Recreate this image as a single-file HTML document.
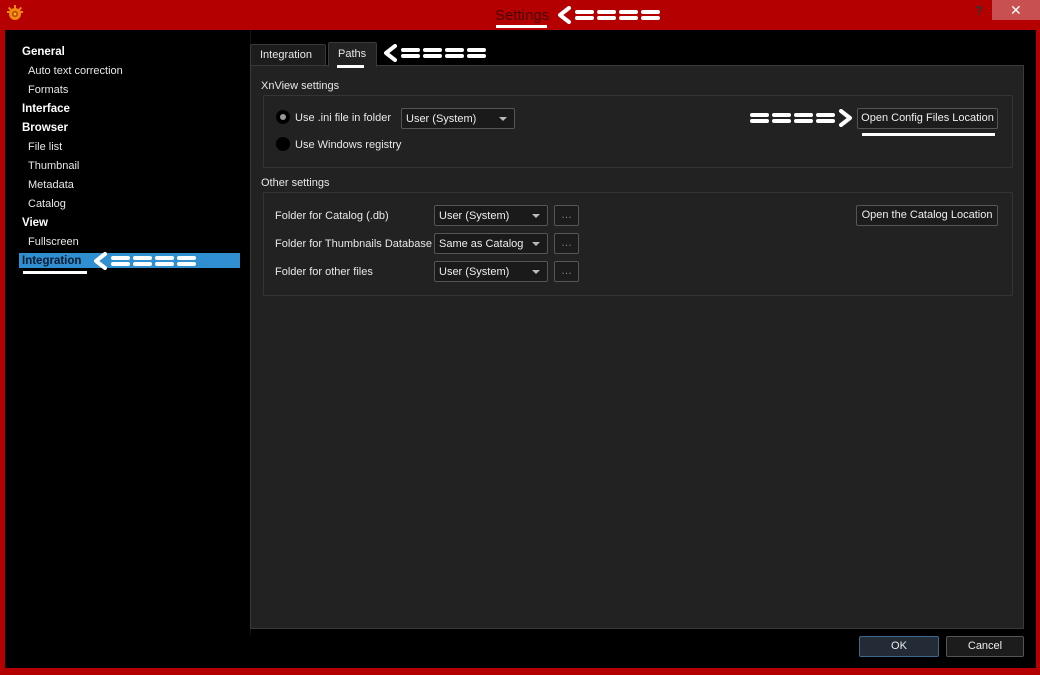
<!DOCTYPE html>
<html><head><meta charset="utf-8"><style>
*{margin:0;padding:0;box-sizing:border-box}
body{width:1040px;height:675px;background:#b40000;position:relative;overflow:hidden;font-family:"Liberation Sans",sans-serif;font-size:11px;color:#e8e8e8}
.a{position:absolute}
.t{position:absolute;white-space:nowrap;line-height:14px}
.b{font-weight:bold;color:#fff;font-size:11.5px}
.combo{position:absolute;background:#1a1a1a;border:1px solid #555;border-radius:2px;height:21px;padding:3px 4px;line-height:14px;color:#eee;white-space:nowrap}
.combo:after{content:"";position:absolute;right:7px;top:8px;border-left:4px solid transparent;border-right:4px solid transparent;border-top:4px solid #bbb}
.btn{position:absolute;background:#1c1c1c;border:1px solid #555;border-radius:2px;height:21px;line-height:19px;text-align:center;color:#eee;white-space:nowrap}
.grp{position:absolute;border:1px solid #353535;border-radius:2px}
</style></head><body>
<svg class="a" style="left:5px;top:4px" width="20" height="18" viewBox="0 0 20 18"><g fill="#f08a10"><circle cx="10" cy="10" r="6"/><rect x="9" y="1" width="2" height="4"/><rect x="4" y="3" width="2" height="4" transform="rotate(-40 5 5)"/><rect x="14" y="3" width="2" height="4" transform="rotate(40 15 5)"/><rect x="2" y="7" width="3" height="2"/><rect x="15" y="7" width="3" height="2"/></g><circle cx="10" cy="10" r="3" fill="#b84000"/><circle cx="10" cy="10" r="1.5" fill="#f8b030"/></svg>
<div class="t" style="left:495px;top:7px;font-size:15px;line-height:17px;color:#4a0000">Settings</div>
<div class="a" style="left:496px;top:25px;width:51px;height:3px;background:#fff"></div>
<div class="t" style="left:975px;top:3px;font-size:13px;line-height:15px;font-weight:bold;color:#333">?</div>
<div class="a" style="left:992px;top:0;width:48px;height:20px;background:#c85050"></div>
<div class="t" style="left:1010px;top:3px;font-size:14px;color:#fff">✕</div>
<div class="a" style="left:5px;top:30px;width:1031px;height:638px;background:#000"></div>
<div class="a" style="left:250px;top:30px;width:1px;height:605px;background:#141414"></div>
<div class="t b" style="left:22px;top:45px">General</div>
<div class="t" style="left:28px;top:64px">Auto text correction</div>
<div class="t" style="left:28px;top:83px">Formats</div>
<div class="t b" style="left:22px;top:102px">Interface</div>
<div class="t b" style="left:22px;top:121px">Browser</div>
<div class="t" style="left:28px;top:140px">File list</div>
<div class="t" style="left:28px;top:159px">Thumbnail</div>
<div class="t" style="left:28px;top:178px">Metadata</div>
<div class="t" style="left:28px;top:197px">Catalog</div>
<div class="t b" style="left:22px;top:216px">View</div>
<div class="t" style="left:28px;top:235px">Fullscreen</div>
<div class="a" style="left:19px;top:253px;width:221px;height:15px;background:#2f8fd0"></div>
<div class="t" style="left:22px;top:254px;font-weight:bold;font-size:11.5px;color:#0a1a30">Integration</div>
<div class="a" style="left:23px;top:271px;width:64px;height:3px;background:#fff"></div>
<div class="a" style="left:250px;top:44px;width:76px;height:22px;background:#1c1c1c;border:1px solid #3a3a3a;border-bottom:none;border-radius:2px 2px 0 0"></div>
<div class="t" style="left:260px;top:48px">Integration</div>
<div class="a" style="left:250px;top:65px;width:774px;height:564px;background:#222;border:1px solid #3a3a3a"></div>
<div class="a" style="left:328px;top:42px;width:49px;height:25px;background:#222;border:1px solid #3a3a3a;border-bottom:none;border-radius:2px 2px 0 0"></div>
<div class="t" style="left:338px;top:47px">Paths</div>
<div class="a" style="left:337px;top:65px;width:27px;height:3px;background:#fff"></div>
<div class="t" style="left:261px;top:79px">XnView settings</div>
<div class="grp" style="left:263px;top:95px;width:750px;height:73px"></div>
<div class="a" style="left:276px;top:110px;width:14px;height:14px;border-radius:50%;background:#000"></div>
<div class="a" style="left:280px;top:114px;width:6px;height:6px;border-radius:50%;background:#999"></div>
<div class="t" style="left:295px;top:111px">Use .ini file in folder</div>
<div class="combo" style="left:401px;top:108px;width:114px">User (System)</div>
<div class="a" style="left:276px;top:137px;width:14px;height:14px;border-radius:50%;background:#000"></div>
<div class="t" style="left:295px;top:138px">Use Windows registry</div>
<div class="btn" style="left:857px;top:108px;width:141px">Open Config Files Location</div>
<div class="a" style="left:862px;top:133px;width:133px;height:3px;background:#fff"></div>
<div class="t" style="left:261px;top:176px">Other settings</div>
<div class="grp" style="left:263px;top:192px;width:750px;height:104px"></div>
<div class="t" style="left:275px;top:209px">Folder for Catalog (.db)</div>
<div class="t" style="left:275px;top:237px">Folder for Thumbnails Database</div>
<div class="t" style="left:275px;top:265px">Folder for other files</div>
<div class="combo" style="left:434px;top:205px;width:114px">User (System)</div>
<div class="combo" style="left:434px;top:233px;width:114px">Same as Catalog</div>
<div class="combo" style="left:434px;top:261px;width:114px">User (System)</div>
<div class="btn" style="left:554px;top:205px;width:25px;color:#888">…</div>
<div class="btn" style="left:554px;top:233px;width:25px;color:#888">…</div>
<div class="btn" style="left:554px;top:261px;width:25px;color:#888">…</div>
<div class="btn" style="left:856px;top:205px;width:142px">Open the Catalog Location</div>
<div class="btn" style="left:859px;top:636px;width:80px;background:#232c36;border-color:#3c6890">OK</div>
<div class="btn" style="left:946px;top:636px;width:78px">Cancel</div>
<svg width="0" height="0" style="position:absolute"><defs><g id="arr"><polyline points="13,2 4,9 13,16" fill="none" stroke="#fff" stroke-width="4" stroke-linecap="round" stroke-linejoin="round"/><g fill="#fff"><rect x="19" y="4" width="19" height="4" rx="2"/><rect x="19" y="10" width="19" height="4" rx="2"/><rect x="41" y="4" width="19" height="4" rx="2"/><rect x="41" y="10" width="19" height="4" rx="2"/><rect x="63" y="4" width="19" height="4" rx="2"/><rect x="63" y="10" width="19" height="4" rx="2"/><rect x="85" y="4" width="19" height="4" rx="2"/><rect x="85" y="10" width="19" height="4" rx="2"/></g></g></defs></svg>
<svg class="a" style="left:556px;top:6px" width="106" height="18"><use href="#arr"/></svg>
<svg class="a" style="left:382px;top:44px" width="106" height="18"><use href="#arr"/></svg>
<svg class="a" style="left:92px;top:252px" width="106" height="18"><use href="#arr"/></svg>
<svg class="a" style="left:748px;top:109px;transform:scaleX(-1)" width="106" height="18"><use href="#arr"/></svg>
</body></html>
